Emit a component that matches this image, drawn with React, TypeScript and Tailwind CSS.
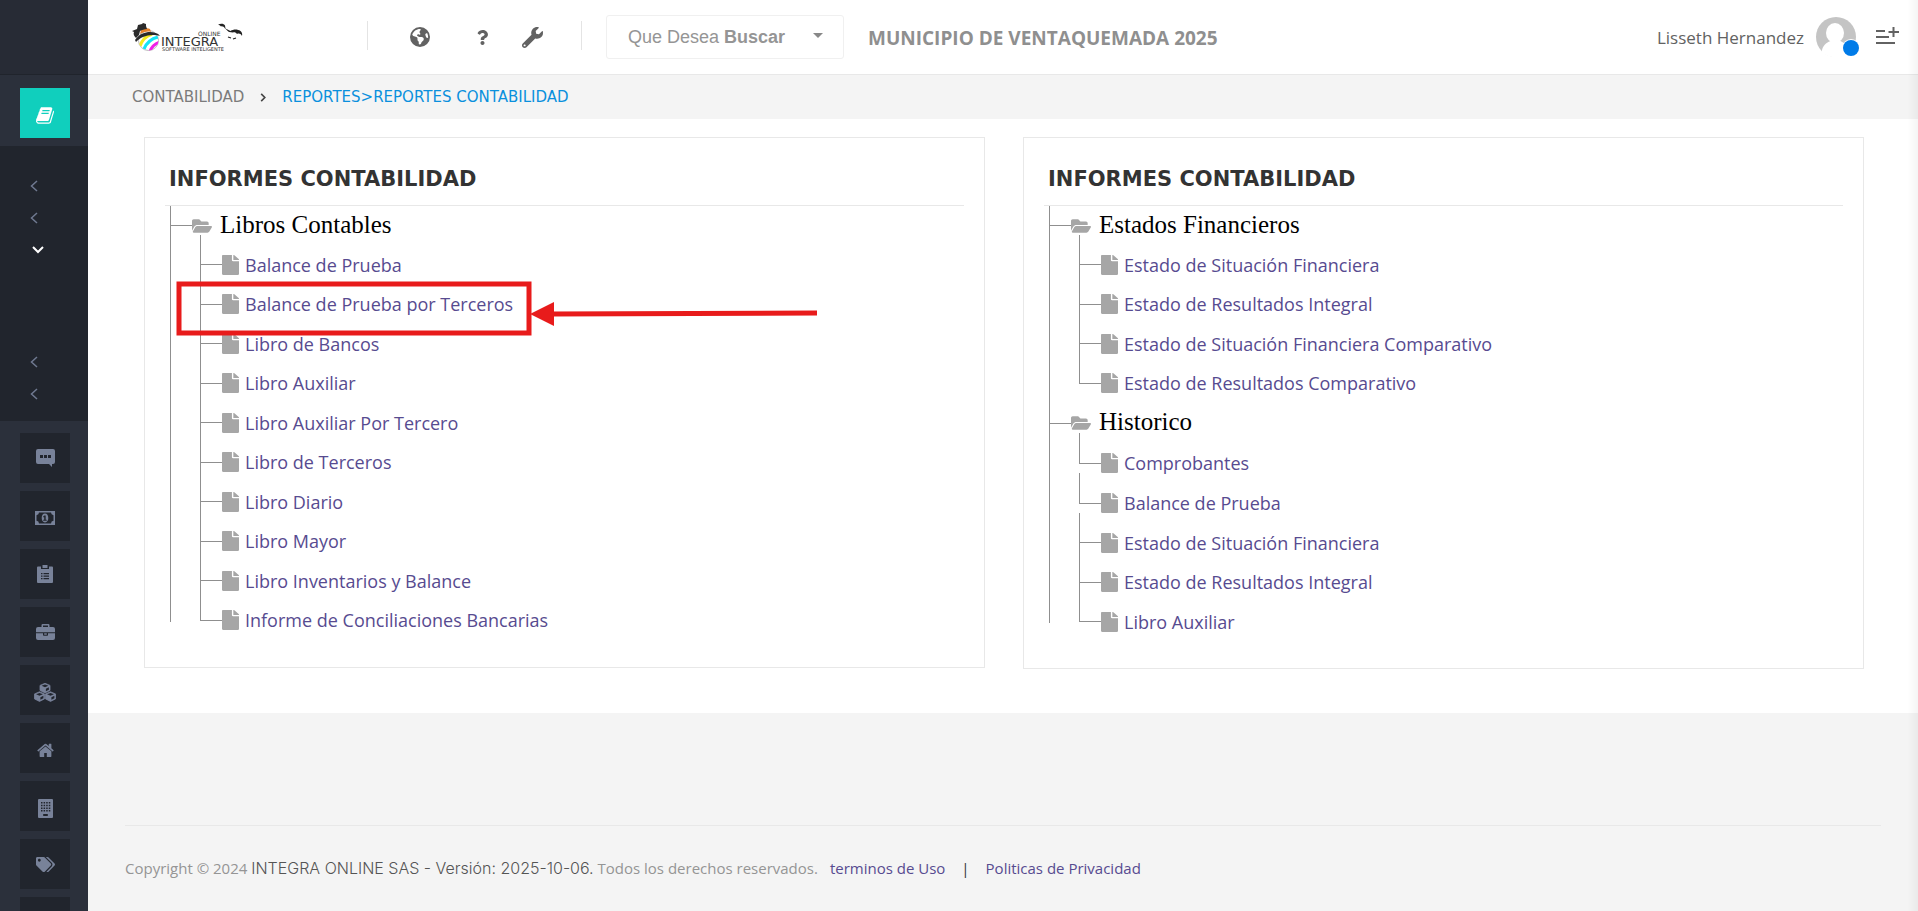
import React from "react";
import { FaQuestion, FaWrench, FaTags, FaFolderOpen, FaFile } from "react-icons/fa";
import { FaEarthAmericas } from "react-icons/fa6";

const UI = "font-['Open_Sans','Noto_Sans',sans-serif]";
const WIDE = "font-['DejaVu_Sans',sans-serif]";

function BookIcon() {
  return (
    <svg viewBox="0 0 1664 1536" className="h-[17px] w-[18px]" fill="currentColor" aria-hidden="true">
      <path d="M1639 350q40 57 18 129l-275 906q-19 64-76.500 107.500t-122.500 43.500h-923q-77 0-148.500-53.500t-99.500-131.500q-24-67-2-127 0-4 3-27t4-37q1-8-3-21.500t-3-19.500q2-11 8-21t16.500-23.500 16.500-23.500q23-38 45-91.500t30-91.500q3-10 .5-30t-.5-28q3-11 17-28t17-23q21-36 42-92t25-90q1-9-2.500-32t.5-28q4-13 22-30.500t22-22.500q19-26 42.500-84.500t27.500-96.500q1-8-3-25.500t-2-26.500q2-8 9-18t18-23 17-21q8-12 16.500-30.500t15-35 16-36 19.500-32 26.500-23.500 36-11.500 47.500 5.500l-1 3q38-9 51-9h761q74 0 114 56t18 130l-274 906q-36 119-71.500 153.500t-128.500 34.500h-869q-27 0-38 15-11 16-1 43 24 70 144 70h923q29 0 56-15.500t35-41.500l300-987q7-22 5-57 38 15 59 43zm-1064 2q-4 13 2 22.500t20 9.500h608q13 0 25.500-9.500t16.500-22.500l21-64q4-13-2-22.500t-20-9.500h-608q-13 0-25.500 9.500t-16.500 22.500zm-83 256q-4 13 2 22.500t20 9.500h608q13 0 25.500-9.500t16.500-22.500l21-64q4-13-2-22.500t-20-9.500h-608q-13 0-25.500 9.500t-16.500 22.500z" />
    </svg>
  );
}

function ChatIcon() {
  return (
    <svg viewBox="0 0 19 18" className="h-[18px] w-[19px]" fill="currentColor" aria-hidden="true">
      <path fillRule="evenodd" d="M2 0h15a2 2 0 0 1 2 2v11a2 2 0 0 1-2 2h-1v3l-3-3H2a2 2 0 0 1-2-2V2a2 2 0 0 1 2-2zM4 6v3h3V6zm4 0v3h3V6zm4 0v3h3V6z" />
    </svg>
  );
}

function MoneyIcon() {
  return (
    <svg viewBox="0 0 20 14" className="mt-1 h-[14px] w-5" fill="currentColor" aria-hidden="true">
      <path
        fillRule="evenodd"
        d="M0 0h20v14H0zM4 1.600a2.700 2.700 0 0 1-2.500 2.600v5.600A2.700 2.700 0 0 1 4 12.400h12a2.700 2.700 0 0 1 2.500-2.600V4.200A2.700 2.700 0 0 1 16 1.600z"
      />
      <path
        fillRule="evenodd"
        d="M10 2.600c2.200 0 3.300 2 3.300 4.400s-1.100 4.400-3.300 4.400S6.700 9.400 6.700 7 7.800 2.600 10 2.600zM9.300 4.500 8.200 5.400v.9h1v2.500h-1v1h3.500v-1h-1V4.500z"
      />
    </svg>
  );
}

function ClipboardIcon() {
  return (
    <svg viewBox="0 0 16 18" className="h-[18px] w-4" fill="currentColor" aria-hidden="true">
      <path
        fillRule="evenodd"
        d="M1 1.500h3V4h8V1.500h3a1 1 0 0 1 1 1V17a1 1 0 0 1-1 1H1a1 1 0 0 1-1-1V2.500a1 1 0 0 1 1-1zM4 8v1.200h1.500V8zm2.500 0v1.200H12V8zM4 10.500v1.200h1.500v-1.200zm2.500 0v1.200H12v-1.200zM4 13v1.200h1.500V13zm2.500 0v1.200H12V13z"
      />
      <path d="M5.500 0h5v3h-5z" />
    </svg>
  );
}

function BriefcaseIcon() {
  return (
    <svg viewBox="0 0 19 16" className="h-4 w-[19px]" fill="currentColor" aria-hidden="true">
      <path
        fillRule="evenodd"
        d="M5.500 3V1.200A1.200 1.200 0 0 1 6.700 0h5.600a1.200 1.200 0 0 1 1.200 1.200V3H17a2 2 0 0 1 2 2v3.300H0V5a2 2 0 0 1 2-2zM7 3h5V1.500H7z"
      />
      <path d="M0 9.300h7V11a.8.800 0 0 0 .8.800h3.400A.8.800 0 0 0 12 11V9.300h7V14a2 2 0 0 1-2 2H2a2 2 0 0 1-2-2z" />
      <path d="M8.200 9.300h2.600v1.400H8.200z" />
    </svg>
  );
}

function CubesIcon() {
  const cube = "M0-4.700 5-2.600v5L0 4.900-5 2.400v-5z";
  const top = "M0-3.600 3.400-2.200 0-.8-3.400-2.200z";
  const side = "M.9.700 3.900-.7v2.400L.9 3.300z";
  return (
    <svg viewBox="0 0 22 19" className="mt-1 h-[19px] w-[22px]" aria-hidden="true">
      {["translate(11 5)", "translate(5.500 13.500)", "translate(16.500 13.500)"].map((t) => (
        <g key={t} transform={t}>
          <path d={cube} fill="currentColor" stroke="currentColor" strokeWidth=".8" strokeLinejoin="round" />
          <path d={top} fill="#21252d" />
          <path d={side} fill="#21252d" />
        </g>
      ))}
    </svg>
  );
}

function HomeIcon() {
  return (
    <svg viewBox="0 190 1664 1346" className="mt-1 h-[14px] w-[17px]" fill="currentColor" aria-hidden="true">
      <path d="M1408 992v480q0 26-19 45t-45 19h-384v-384h-256v384h-384q-26 0-45-19t-19-45v-480q0-1 .5-3t.5-3l575-474 575 474q1 2 1 6zm223-69l-62 74q-8 9-21 11h-3q-13 0-21-7l-692-577-692 577q-12 8-24 7-13-2-21-11l-62-74q-8-10-7-23.500t11-21.500l719-599q32-26 76-26t76 26l244 204v-195q0-14 9-23t23-9h192q14 0 23 9t9 23v408l219 182q10 8 11 21.500t-7 23.500z" />
    </svg>
  );
}

function BuildingIcon() {
  return (
    <svg viewBox="0 0 15 19" className="mt-1 h-[19px] w-[15px]" aria-hidden="true">
      <rect width="15" height="19" rx="1" fill="currentColor" />
      <g fill="#21252d">
        {[3, 5.700, 8.400, 11.100].map((y) => (
          <path key={y} d={`M3 ${y}h1.500v1.500H3zm2.600 0h1.500v1.500H5.600zm2.600 0h1.500v1.500H8.200zm2.600 0h1.500v1.500h-1.500z`} />
        ))}
        <path d="M5.200 15h4.600v2H5.200z" />
      </g>
    </svg>
  );
}

const modules = [
  { label: "Mensajes", icon: <ChatIcon /> },
  { label: "Tesorería", icon: <MoneyIcon /> },
  { label: "Presupuesto", icon: <ClipboardIcon /> },
  { label: "Contratación", icon: <BriefcaseIcon /> },
  { label: "Almacén", icon: <CubesIcon /> },
  { label: "Predial", icon: <HomeIcon /> },
  { label: "Industria", icon: <BuildingIcon /> },
  { label: "Etiquetas", icon: <FaTags size={19} /> },
  { label: "Otros", icon: null },
];

function Chevron({ open = false }: { open?: boolean }) {
  return open ? (
    <svg viewBox="0 0 12 8" className="ml-8 h-2 w-3 text-white" fill="none" stroke="currentColor" strokeWidth="2" aria-hidden="true">
      <path d="M1 1l5 5 5-5" />
    </svg>
  ) : (
    <svg viewBox="0 0 8 12" className="ml-[30px] h-3 w-2 text-[#6f7990]" fill="none" stroke="currentColor" strokeWidth="1.500" aria-hidden="true">
      <path d="M7 1L1.500 6 7 11" />
    </svg>
  );
}

function SubItem({ label, open }: { label: string; open?: boolean }) {
  return (
    <button type="button" aria-label={label} aria-expanded={!!open} className="flex h-8 w-full items-center">
      <Chevron open={open} />
    </button>
  );
}

function Sidebar() {
  return (
    <aside className="flex w-[88px] shrink-0 flex-col overflow-hidden bg-[#2b303b]">
      <div className="h-[75px] shrink-0 border-b border-[#20242c] bg-[#272b35]" />
      <div className="flex h-[71px] shrink-0 items-start pt-[13px] pl-5">
        <button type="button" aria-label="Contabilidad" className="grid size-[50px] place-items-center bg-[#10cfbd] pt-1 text-white">
          <BookIcon />
        </button>
      </div>
      <div className="flex h-[275px] shrink-0 flex-col bg-[#21252d] pt-6">
        <SubItem label="Parametrización" />
        <SubItem label="Movimientos" />
        <SubItem label="Reportes" open />
        <div className="h-20" />
        <SubItem label="Procesos" />
        <SubItem label="Utilidades" />
      </div>
      <div className="flex flex-col gap-2 pt-3 pl-5">
        {modules.map((m) => (
          <button
            key={m.label}
            type="button"
            aria-label={m.label}
            className="grid size-[50px] shrink-0 place-items-center bg-[#21252d] text-[#788299]"
          >
            {m.icon}
          </button>
        ))}
      </div>
    </aside>
  );
}

function Logo() {
  return (
    <svg viewBox="0 0 112 32" className="h-8 w-28" role="img" aria-label="Integra Online">
      <defs>
        <clipPath id="ball">
          <circle cx="16.500" cy="18.500" r="10" />
        </clipPath>
      </defs>
      <circle cx="16.500" cy="18.500" r="10" fill="#fff" stroke="#bbb" strokeWidth="1" />
      <g clipPath="url(#ball)" fill="none" strokeWidth="3.200">
        <path d="M8 24C10 18 14 14 20 12" stroke="#f4ea20" />
        <path d="M12 27C14 22 18 17 26 15" stroke="#16e4f5" />
        <path d="M18 30C19 26 22 22 28 20" stroke="#f020e8" />
      </g>
      <path d="M3 18C7 12 13 10 18 10c4 0 8 1 10 4-7-2-12-1-17 1-3 1-5 3-7 5z" fill="#2b2b2b" />
      <path d="M8 12l1-4c4-2 7-2 9-1l1 3c-4-1-7 0-11 2z" fill="#e5812c" />
      <path d="M0 9l5-2 1-4 4-1 1-1 3 1v2l1 3c-3 0-5 1-7 2l-1 4-3 3C2 14 1 12 2 10z" fill="#2b2b2b" />
      <g fill="#333" className="font-['DejaVu_Sans',sans-serif]">
        <text x="66" y="14" fontSize="6">ONLINE</text>
        <text x="29" y="24" fontSize="13">INTEGRA</text>
        <text x="30" y="29" fontSize="5">SOFTWARE INTELIGENTE</text>
      </g>
      <path
        d="M86 2.500c3-1.500 6-1 7 1l.5 3 3 1.500 2 1c3-2 7-2 10 0 1.500 1 2 3 1.500 5-1.500-2.500-3-3-5-2-1-1.500-2.500-2-4-1.500l-4-.5c-1.500-1-2-2-4-3.500-1-2-3-2.500-4-2-1-1-2-2-3-2z"
        fill="#222"
      />
      <path d="M96 15l3 1m2 1l3-1" stroke="#222" strokeWidth="1.200" />
    </svg>
  );
}

function Header() {
  return (
    <header className="flex h-[75px] shrink-0 items-center border-b border-[#e8e8e8] bg-white pl-11 pr-[19px]">
      <a href="#inicio" className="mt-0.5">
        <Logo />
      </a>
      <div className="ml-[123px] mb-1 h-[29px] w-px bg-[#e4e4e4]" />
      <nav aria-label="Accesos" className="flex w-[213px] shrink-0 items-center pl-[42px] text-[#626262]">
        <button type="button" aria-label="Idioma"><FaEarthAmericas size={20} /></button>
        <button type="button" aria-label="Ayuda" className="ml-[45px]"><FaQuestion size={15} /></button>
        <button type="button" aria-label="Configuración" className="ml-8"><FaWrench size={21} /></button>
      </nav>
      <div className="mb-1 h-[29px] w-px bg-[#e4e4e4]" />
      <button
        type="button"
        className="ml-6 flex h-11 w-[238px] shrink-0 items-center justify-between rounded-[3px] border border-[#f0f0f0] pl-[21px] pr-5 font-['Liberation_Sans',Arial,sans-serif] text-[18px] leading-6 text-[#959595]"
      >
        <span>
          Que Desea <b>Buscar</b>
        </span>
        <span className="mb-1 h-0 w-0 border-x-[5px] border-t-[5px] border-x-transparent border-t-[#888]" />
      </button>
      <strong className={`ml-6 whitespace-nowrap pt-0.5 text-[19px] font-bold leading-6 text-[#8f8f8f] ${UI}`}>
        MUNICIPIO DE VENTAQUEMADA 2025
      </strong>
      <div className="ml-auto flex items-center">
        <span className={`whitespace-nowrap pt-0.5 text-[17px] leading-6 text-[#626262] ${UI}`}>Lisseth Hernandez</span>
        <button type="button" aria-label="Perfil" className="ml-[11px]">
          <svg viewBox="0 0 44 42" className="h-[42px] w-11" aria-hidden="true">
            <circle cx="21" cy="21" r="20" fill="#c4c4c4" />
            <ellipse cx="20" cy="17" rx="9" ry="10" fill="#fff" />
            <path d="M6.500 36c1-6 4-9 9-11h10c6 3 9 6 10 12-7 6-22 6-29-1z" fill="#fff" />
            <circle cx="36" cy="32" r="9" fill="#fff" />
            <circle cx="36" cy="32" r="8" fill="#007be8" />
          </svg>
        </button>
        <button type="button" aria-label="Abrir panel" className="ml-4 text-[#626262]">
          <svg viewBox="0 0 24 20" className="h-5 w-6" fill="none" stroke="currentColor" strokeWidth="2" aria-hidden="true">
            <path d="M1 4h9M1 10h13M1 16h19M18.500 0v10M13.500 5H24" />
          </svg>
        </button>
      </div>
    </header>
  );
}

function Breadcrumb() {
  return (
    <nav aria-label="Ruta" className={`flex h-11 shrink-0 items-center bg-[#f4f4f4] pl-11 text-[15px] leading-5 ${WIDE}`}>
      <a href="#contabilidad" className="text-[#7b7b7b]">CONTABILIDAD</a>
      <svg viewBox="0 0 6 10" className="mx-4 h-[9px] w-1.5" fill="none" stroke="#444" strokeWidth="1.800" aria-hidden="true">
        <path d="M1 1l4 4-4 4" />
      </svg>
      <a href="#reportes" className="text-[#0a90dd]">REPORTES&gt;REPORTES CONTABILIDAD</a>
    </nav>
  );
}

function Callout() {
  return (
    <svg
      viewBox="0 0 644 56"
      className="pointer-events-none absolute -top-1 -left-6 z-10 h-14 w-[644px]"
      aria-hidden="true"
    >
      <rect x="3" y="4" width="350" height="49" fill="none" stroke="#e81b1b" strokeWidth="5" />
      <path d="M376 34l265-1" stroke="#e81b1b" strokeWidth="5" />
      <path d="M354 34l24-12v24z" fill="#e81b1b" />
    </svg>
  );
}

const LINE = "border-[#8f8f8f]";

function Branch({ items, marked }: { items: string[]; marked?: string }) {
  return (
    <div>
      <div className={`-mt-2.5 h-2.5 w-[22px] border-l ${LINE}`} />
      <ul>
        {items.map((label) => (
          <li key={label} className="group relative flex h-[39px] items-center only:h-10 even:h-10">
            <span className="flex w-[22px] flex-col self-stretch">
              <span className={`flex-1 border-b border-l ${LINE}`} />
              <span className={`flex-1 border-l group-last:border-l-0 ${LINE}`} />
            </span>
            <FaFile className="h-5 w-[17px] text-[#a6a6a6]" preserveAspectRatio="none" aria-hidden="true" />
            <a href="#informe" className={`ml-1.5 whitespace-nowrap text-[18px] leading-6 text-[#574b90] ${UI}`}>
              {label}
            </a>
            {label === marked && <Callout />}
          </li>
        ))}
      </ul>
    </div>
  );
}

type Folder = { name: string; branches: string[][]; marked?: string };

function ReportCard({ folders }: { folders: Folder[] }) {
  return (
    <section className="min-w-0 flex-1 border border-[#e8e8e8] px-5 pb-[27px]">
      <h2 className="flex h-[68px] items-center border-b border-[#e8e8e8] pt-3.5 pl-1 font-['Comic_Sans_MS','DejaVu_Sans',sans-serif] text-[21px] font-bold leading-6 text-[#333]">
        INFORMES CONTABILIDAD
      </h2>
      <div className="flex pl-[5px]">
        <div className="mb-[18px] w-px shrink-0 bg-[#8f8f8f]" />
        <ul>
          {folders.map((f) => (
            <li key={f.name} className="group/folder">
              <div className="flex h-10 items-center group-first/folder:h-[39px]">
                <span className={`w-[21px] border-b ${LINE}`} />
                <FaFolderOpen size={20} color="#a6a6a6" aria-hidden="true" />
                <span className="ml-2 whitespace-nowrap pb-0.5 font-['Liberation_Serif','Times_New_Roman',serif] text-[25px] leading-7 text-black">
                  {f.name}
                </span>
              </div>
              <div className="pl-[29px]">
                {f.branches.map((b) => (
                  <Branch key={b[0]} items={b} marked={f.marked} />
                ))}
              </div>
            </li>
          ))}
        </ul>
      </div>
    </section>
  );
}

const left: Folder[] = [
  {
    name: "Libros Contables",
    marked: "Balance de Prueba por Terceros",
    branches: [
      [
        "Balance de Prueba",
        "Balance de Prueba por Terceros",
        "Libro de Bancos",
        "Libro Auxiliar",
        "Libro Auxiliar Por Tercero",
        "Libro de Terceros",
        "Libro Diario",
        "Libro Mayor",
        "Libro Inventarios y Balance",
        "Informe de Conciliaciones Bancarias",
      ],
    ],
  },
];

const right: Folder[] = [
  {
    name: "Estados Financieros",
    branches: [
      [
        "Estado de Situación Financiera",
        "Estado de Resultados Integral",
        "Estado de Situación Financiera Comparativo",
        "Estado de Resultados Comparativo",
      ],
    ],
  },
  {
    name: "Historico",
    branches: [
      ["Comprobantes"],
      ["Balance de Prueba"],
      ["Estado de Situación Financiera", "Estado de Resultados Integral", "Libro Auxiliar"],
    ],
  },
];

function Footer() {
  return (
    <footer className="flex-1 bg-[#f4f4f4] px-[37px] pt-28">
      <div className={`flex items-baseline border-t border-[#e8e8e8] pt-[30px] text-[15px] leading-6 text-[#959595] ${UI}`}>
        <p className="whitespace-nowrap">
          Copyright © 2024{" "}
          <span className="font-['Inter',sans-serif] text-[16px] font-light text-[#555]">INTEGRA ONLINE SAS - Versión: 2025-10-06.</span>{" "}
          Todos los derechos reservados.
        </p>
        <a href="#terminos" className="ml-3 text-[#574b90]">terminos de Uso</a>
        <span className="mx-4 text-[#333]">|</span>
        <a href="#privacidad" className="text-[#574b90]">Politicas de Privacidad</a>
      </div>
    </footer>
  );
}

export default function App() {
  return (
    <div className="flex h-screen overflow-hidden bg-white">
      <Sidebar />
      <div className="flex min-w-0 flex-1 flex-col">
        <Header />
        <Breadcrumb />
        <main className="flex shrink-0 items-start gap-[38px] bg-white pt-[18px] pr-[54px] pb-11 pl-14">
          <ReportCard folders={left} />
          <ReportCard folders={right} />
        </main>
        <Footer />
      </div>
      <div className="pointer-events-none fixed inset-y-0 right-0 w-2.5 bg-linear-to-l from-black/4 to-transparent" />
    </div>
  );
}
